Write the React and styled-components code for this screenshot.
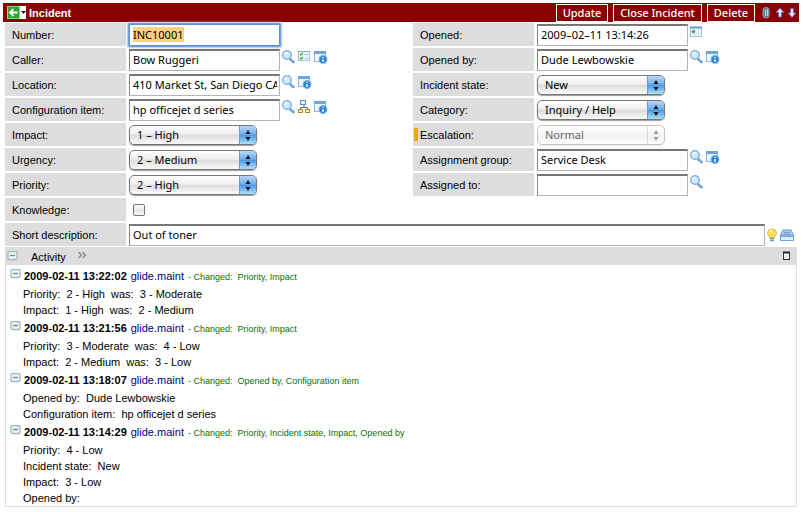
import React, { useEffect, useRef } from "react";
import styled, { createGlobalStyle, css } from "styled-components";

const GlobalStyle = createGlobalStyle`
  *, *::before, *::after { box-sizing: border-box; }
  body {
    margin: 0;
    background: #fff;
    color: #000;
    font-family: "Liberation Sans", Arial, Helvetica, sans-serif;
    font-size: 11px;
  }
`;

const fieldFont = css`
  font-family: "Noto Sans", "Open Sans", "Lucida Grande", sans-serif;
  font-size: 11px;
  line-height: 16px;
`;

const Page = styled.main`
  padding: 3px 4px 4px 3px;
`;

const TitleBar = styled.header`
  display: flex;
  align-items: center;
  height: 19px;
  padding-left: 4px;
  background: #8b0000;
  color: #fff;
`;

const PlainButton = styled.button`
  display: flex;
  padding: 0;
  border: 0;
  background: none;
  cursor: pointer;
`;

const BackButton = styled(PlainButton)`
  align-items: center;
  height: 13px;
  background: #fff;
`;

const Title = styled.h1`
  flex: 1;
  margin: 0 0 0 3px;
  font-size: 11px;
  line-height: 16px;
`;

const Actions = styled.div`
  display: flex;
  align-items: center;
  gap: 5px;
`;

const ActionButton = styled.button`
  ${fieldFont}
  height: 18px;
  padding: 0 6px;
  border: 1px solid #fff;
  background: #8b0000;
  color: #fff;
  font-weight: 500;
`;

const HeaderIcons = styled.div`
  display: flex;
  align-items: center;
  height: 16px;
  padding: 0 2px 0 4px;
  gap: 2px;
`;

const Form = styled.form`
  display: grid;
  gap: 2px;
  padding: 1px 0 1px 2px;
`;

const Columns = styled.div`
  display: grid;
  grid-template-columns: 1fr 1fr;
  gap: 22px;
`;

const FieldColumn = styled.div`
  display: grid;
  align-content: start;
  gap: 2px;
`;

const Row = styled.div`
  display: grid;
  grid-template-columns: 121px 1fr;
  gap: 3px;
  height: 23px;
`;

const Label = styled.label`
  padding-left: ${(p) => (p.$marked ? "1px" : "7px")};
  display: flex;
  align-items: center;
  gap: 2px;
  background: #ddd;
  line-height: 16px;
`;

const Marker = styled.span`
  width: 4px;
  height: 13px;
  background: #ffa500;
`;

const Control = styled.div`
  display: flex;
  align-items: center;
  min-width: 0;
  gap: 1px;
`;

const TextInput = styled.input`
  ${fieldFont}
  flex: ${(p) => (p.$wide ? "1" : "0 0 151px")};
  min-width: 0;
  height: 22px;
  padding: 0 2px 1px 3px;
  border: 1px solid #b4b4b4;
  border-top: 2px solid #777;
  border-left-color: #888;
  border-radius: 0;
  background: #fff;
  color: #000;
  outline: none;
  &::selection { background: #ffcf85; color: #000; }
  ${(p) => p.$active && css`
    border: 1px solid #5d93d4;
    border-radius: 1px;
    box-shadow: 0 0 0 1px #70a2dd, 0 0 2px 2px #a9c8ec;
  `}
`;

const FieldIcons = styled.div`
  display: flex;
  align-self: flex-start;
  height: 16px;
  margin-top: 2px;
`;

const SelectFrame = styled.div`
  display: grid;
  width: 128px;
  height: 20px;
  border: 1px solid ${(p) => (p.$disabled ? "#c4c4c4" : "#777")};
  border-radius: 5px;
  box-shadow: 0 1px 1px ${(p) => (p.$disabled ? "#eee" : "#999")};
  background: ${(p) => p.$disabled
    ? "linear-gradient(#fff, #f4f4f4 48%, #efefef 50%, #fdfdfd)"
    : "linear-gradient(#fff, #eee 46%, #dcdcdc 50%, #fafafa)"};
  overflow: hidden;
  & > * { grid-area: 1 / 1; }
`;

const Select = styled.select`
  ${fieldFont}
  appearance: none;
  z-index: 1;
  width: 100%;
  height: 18px;
  padding: 0 18px 0 7px;
  border: 0;
  background: transparent;
  color: #000;
  outline: none;
  &:disabled { color: #666; opacity: 1; }
`;

const SelectArrow = styled.span`
  justify-self: end;
  width: 17px;
  height: 18px;
  border-left: 1px solid ${(p) => (p.$disabled ? "#ddd" : "#6c9bd0")};
  background: ${(p) => p.$disabled
    ? "transparent"
    : "linear-gradient(#b9d6f6, #6fabec 46%, #4b94e3 50%, #a6e2ff)"};
  color: ${(p) => (p.$disabled ? "#999" : "#111")};
`;

const Check = styled.input`
  appearance: none;
  width: 12px;
  height: 12px;
  margin: 0 0 0 4px;
  border: 1px solid #777;
  border-radius: 2px;
  background: linear-gradient(#fff, #e4e4e4 50%, #fafafa);
`;

const ShortIcons = styled.div`
  display: flex;
  align-items: center;
  width: 33px;
`;

const Activity = styled.section`
  margin: 0 2px 0 2px;
  border: 1px solid #ddd;
  border-top: 0;
`;

const ActivityBar = styled.div`
  display: flex;
  align-items: center;
  height: 18px;
  padding: 0 5px 0 1px;
  background: #ddd;
`;

const ActivityTitle = styled.h2`
  margin: 3px 11px 0 13px;
  font-size: 11px;
  font-weight: 400;
  line-height: 15px;
`;

const Spacer = styled.span`
  flex: 1;
`;

const Entries = styled.div`
  padding: 1px 0 0 4px;
`;

const EntryHead = styled.div`
  display: flex;
  align-items: center;
  height: 20px;
  white-space: pre;
`;

const Toggle = styled(PlainButton)`
  align-self: flex-start;
  padding-top: 3px;
`;

const Time = styled.time`
  margin-left: 3px;
  font-size: 11px;
  font-weight: 700;
`;

const User = styled.a`
  margin: 0 4px;
  font-size: 11px;
  color: #000080;
  text-decoration: none;
`;

const Changed = styled.span`
  padding-top: 2px;
  font-size: 9px;
  color: #067006;
`;

const Change = styled.p`
  margin: 0 0 0 13px;
  height: 16px;
  font-size: 11px;
  line-height: 16px;
  white-space: pre;
`;

const Svg = ({ w = 16, h = 16, children }) => (
  <svg width={w} height={h} viewBox={`0 0 ${w} ${h}`} fill="none" aria-hidden="true">{children}</svg>
);

const icons = {
  search: (
    <Svg>
      <path d="M9.5 9.5 12.500 12" stroke="#5c91cf" strokeWidth="2.6" strokeLinecap="round" />
      <path d="M10 9.5 12.500 11.500" stroke="#b9d8f5" strokeWidth="1" />
      <circle cx="6" cy="5" r="4.300" fill="#d0eafd" stroke="#83b0de" strokeWidth="1.400" />
      <path d="M3.8 5c0-1.6 1-2.5 2.6-2.6" stroke="#fff" strokeWidth="1.2" />
    </Svg>
  ),
  info: (
    <Svg>
      <rect x="1.500" y="1.500" width="11" height="10" fill="#eef6fe" stroke="#8db8e6" />
      <path d="M1 1h12v3H1z" fill="#6da5e0" />
      <circle cx="10" cy="9.500" r="4" fill="#2f83d3" stroke="#7db2e6" />
      <path d="M10 9v3M10 7v1" stroke="#fff" strokeWidth="1.4" />
    </Svg>
  ),
  list: (
    <Svg>
      <rect x="1.500" y="1.500" width="11" height="9" fill="#edf6fe" stroke="#a1c3e9" />
      <path d="M1 1.500h12" stroke="#76a9e2" />
      <path d="m3 4 1 1 2-2M3 8l1 1 2-2" stroke="#46a72c" strokeWidth="1.3" />
      <path d="M7.500 4.500h4M7.500 8.500h4" stroke="#9fc2e6" />
    </Svg>
  ),
  tree: (
    <Svg>
      <path d="M7 5v3M3.500 10V7.500h7V10" stroke="#666" />
      <rect x="3.500" y="0.500" width="5" height="4" fill="#e1f0ff" stroke="#5a8fcb" />
      <rect x="1.500" y="9.500" width="4" height="3" fill="#fff2b1" stroke="#b08b2a" />
      <rect x="8.500" y="9.500" width="4" height="3" fill="#fff2b1" stroke="#b08b2a" />
    </Svg>
  ),
  calendar: (
    <Svg>
      <rect x="1.500" y="2.500" width="11" height="9" fill="#f3f9ff" stroke="#9dc1e8" />
      <path d="M1 2.500h12" stroke="#5f99dc" strokeWidth="2" />
      <path d="M2 8.500h10M5.500 4v7M9.500 4v7" stroke="#d4e5f6" />
      <circle cx="4.500" cy="6.500" r="1.800" fill="#4fac3c" />
    </Svg>
  ),
};

const iconNames = {
  search: "Look up",
  info: "Show record",
  list: "Show related list",
  tree: "Show dependencies",
  calendar: "Pick a date",
};

const Minus = () => (
  <Svg w={11} h={10}>
    <rect x="1" y="0.500" width="9" height="8" rx="1.500" fill="#f0f5f8" stroke="#a3b5c0" strokeWidth="1.300" />
    <path d="M3 4.500h5" stroke="#6f8da1" strokeWidth="1.400" />
  </Svg>
);

function Field({ field }) {
  const { id, label, value, kind = "text", tools = [], disabled, marked, active } = field;
  const ref = useRef(null);
  useEffect(() => {
    if (active && ref.current) {
      ref.current.focus();
      ref.current.select();
    }
  }, [active]);
  return (
    <Row>
      <Label htmlFor={id} $marked={marked}>{marked && <Marker />}{label}:</Label>
      <Control>
        {kind === "text" && (
          <TextInput ref={ref} id={id} type="text" defaultValue={value} $active={active} />
        )}
        {kind === "select" && (
          <SelectFrame $disabled={disabled}>
            <SelectArrow $disabled={disabled}>
              <Svg w={16} h={18}>
                <path d="M8 4l2.500 4h-5zM8 15l-2.500-4h5z" fill="currentColor" />
              </Svg>
            </SelectArrow>
            <Select id={id} defaultValue={value} disabled={disabled}>
              <option>{value}</option>
            </Select>
          </SelectFrame>
        )}
        {kind === "check" && <Check id={id} type="checkbox" />}
        {tools.length > 0 && (
          <FieldIcons>
            {tools.map((t) => (
              <PlainButton key={t} type="button" aria-label={`${iconNames[t]}: ${label}`}>{icons[t]}</PlainButton>
            ))}
          </FieldIcons>
        )}
      </Control>
    </Row>
  );
}

const leftFields = [
  { id: "number", label: "Number", value: "INC10001", active: true },
  { id: "caller", label: "Caller", value: "Bow Ruggeri", tools: ["search", "list", "info"] },
  { id: "location", label: "Location", value: "410 Market St, San Diego CA", tools: ["search", "info"] },
  { id: "ci", label: "Configuration item", value: "hp officejet d series", tools: ["search", "tree", "info"] },
  { id: "impact", label: "Impact", value: "1 – High", kind: "select" },
  { id: "urgency", label: "Urgency", value: "2 – Medium", kind: "select" },
  { id: "priority", label: "Priority", value: "2 – High", kind: "select" },
  { id: "knowledge", label: "Knowledge", kind: "check" },
];

const rightFields = [
  { id: "opened", label: "Opened", value: "2009–02–11 13:14:26", tools: ["calendar"] },
  { id: "openedby", label: "Opened by", value: "Dude Lewbowskie", tools: ["search", "info"] },
  { id: "state", label: "Incident state", value: "New", kind: "select" },
  { id: "category", label: "Category", value: "Inquiry / Help", kind: "select" },
  { id: "escalation", label: "Escalation", value: "Normal", kind: "select", disabled: true, marked: true },
  { id: "group", label: "Assignment group", value: "Service Desk", tools: ["search", "info"] },
  { id: "assigned", label: "Assigned to", value: "", tools: ["search"] },
];

const entries = [
  {
    time: "2009-02-11 13:22:02",
    changed: "Priority, Impact",
    lines: ["Priority:  2 - High  was:  3 - Moderate", "Impact:  1 - High  was:  2 - Medium"],
  },
  {
    time: "2009-02-11 13:21:56",
    changed: "Priority, Impact",
    lines: ["Priority:  3 - Moderate  was:  4 - Low", "Impact:  2 - Medium  was:  3 - Low"],
  },
  {
    time: "2009-02-11 13:18:07",
    changed: "Opened by, Configuration item",
    lines: ["Opened by:  Dude Lewbowskie", "Configuration item:  hp officejet d series"],
  },
  {
    time: "2009-02-11 13:14:29",
    changed: "Priority, Incident state, Impact, Opened by",
    lines: ["Priority:  4 - Low", "Incident state:  New", "Impact:  3 - Low", "Opened by:"],
  },
];

export default function App() {
  return (
    <>
      <GlobalStyle />
      <Page>
        <TitleBar>
          <BackButton type="button" aria-label="Back">
            <Svg w={19} h={13}>
              <rect x="0.500" y="0.500" width="12" height="12" fill="#2ba72f" stroke="#8ed48b" />
              <path d="M10.500 6.500H3.500M6.500 3 3 6.500 6.500 10" stroke="#fff" strokeWidth="1.800" />
              <path d="M14 5h5l-2.500 3z" fill="#222" />
            </Svg>
          </BackButton>
          <Title>Incident</Title>
          <Actions>
            <ActionButton type="button">Update</ActionButton>
            <ActionButton type="button">Close Incident</ActionButton>
            <ActionButton type="button">Delete</ActionButton>
          </Actions>
          <HeaderIcons>
            <PlainButton type="button" aria-label="Attachments">
              <Svg w={14} h={14}>
                <rect x="4" y="1.500" width="6" height="10.500" rx="2.500" fill="#5f7f8e" stroke="#84a9b8" />
                <path d="M6.500 4v6M8.500 3v7" stroke="#c3dbe5" />
              </Svg>
            </PlainButton>
            <PlainButton type="button" aria-label="Previous record">
              <Svg w={10} h={12}>
                <path d="M5 1 9 5.500H6.500V10h-3V5.500H1z" fill="#e8e4ff" stroke="#6467b5" />
              </Svg>
            </PlainButton>
            <PlainButton type="button" aria-label="Next record">
              <Svg w={10} h={12}>
                <path d="M5 10.500 9 6H6.500V1.500h-3V6H1z" fill="#e8e4ff" stroke="#6467b5" />
              </Svg>
            </PlainButton>
          </HeaderIcons>
        </TitleBar>

        <Form>
          <Columns>
            <FieldColumn>{leftFields.map((f) => <Field key={f.id} field={f} />)}</FieldColumn>
            <FieldColumn>{rightFields.map((f) => <Field key={f.id} field={f} />)}</FieldColumn>
          </Columns>
          <Row>
            <Label htmlFor="short">Short description:</Label>
            <Control>
              <TextInput id="short" type="text" defaultValue="Out of toner" $wide />
              <ShortIcons>
                <PlainButton type="button" aria-label="Suggestions">
                  <Svg w={12} h={16}>
                    <path d="M3.500 9.500Q1.500 7.500 1.500 5.500 2 2 6 2t4.500 3.500q0 2-2 4V11h-5z" fill="#ffdf4d" stroke="#dfb653" />
                    <path d="M4 5q.5-1.500 2-1.500" stroke="#fff" strokeWidth="1.300" />
                    <path d="M4 11.500h4M4 13.500h4" stroke="#6f94c4" strokeWidth="1.400" />
                  </Svg>
                </PlainButton>
                <PlainButton type="button" aria-label="Search knowledge base">
                  <Svg w={17} h={16}>
                    <path d="M5 3h8l3 6H2z" fill="#a9cbef" stroke="#6a9bd2" />
                    <path d="M6 5.500h6M5 7.500h8" stroke="#6f9dd2" />
                    <rect x="2.500" y="9.500" width="13" height="4" fill="#e1f0fd" stroke="#76a5d8" />
                  </Svg>
                </PlainButton>
              </ShortIcons>
            </Control>
          </Row>
        </Form>

        <Activity>
          <ActivityBar>
            <PlainButton type="button" aria-label="Collapse activity"><Minus /></PlainButton>
            <ActivityTitle>Activity</ActivityTitle>
            <PlainButton type="button" aria-label="More">
              <Svg w={10} h={10}>
                <path d="m1.500 1 3 3-3 3M5.500 1l3 3-3 3" stroke="#71879a" strokeWidth="1.200" />
              </Svg>
            </PlainButton>
            <Spacer />
            <PlainButton type="button" aria-label="Maximize">
              <Svg w={8} h={10}>
                <rect x="0.500" y="1.500" width="6" height="7" fill="#eee" stroke="#333" />
                <path d="M0 1.500h7" stroke="#222" strokeWidth="2" />
              </Svg>
            </PlainButton>
          </ActivityBar>
          <Entries>
            {entries.map((e) => (
              <article key={e.time}>
                <EntryHead>
                  <Toggle type="button" aria-label={`Collapse ${e.time}`}><Minus /></Toggle>
                  <Time>{e.time}</Time>
                  <User href="#user">glide.maint</User>
                  <Changed>{`- Changed:  ${e.changed}`}</Changed>
                </EntryHead>
                {e.lines.map((line) => <Change key={line}>{line}</Change>)}
              </article>
            ))}
          </Entries>
        </Activity>
      </Page>
    </>
  );
}
